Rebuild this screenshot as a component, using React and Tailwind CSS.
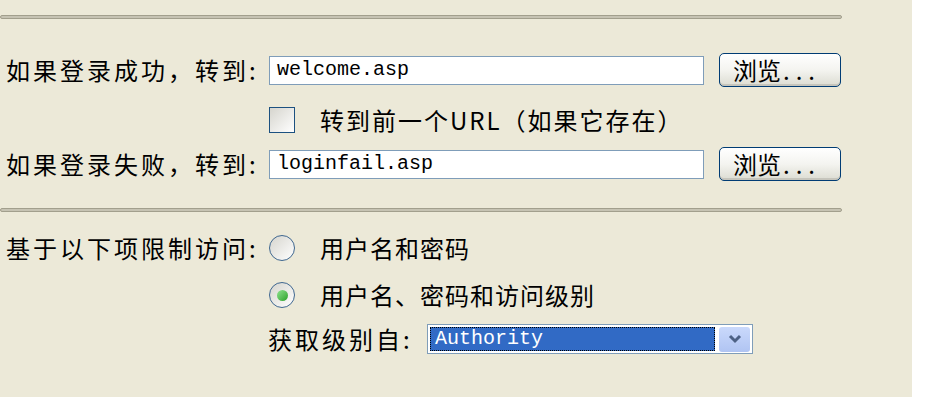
import React from 'react';

const cjk = { fontFamily: '"Noto Sans CJK SC", "Noto Sans", sans-serif' };
const mono = { fontFamily: '"Liberation Mono", "DejaVu Sans Mono", monospace' };

function Separator({ className }) {
  return (
    <div className={`w-[842px] h-[4px] rounded-full border border-[#a29f8d] bg-[#c6c3b3] ${className}`} />
  );
}

function TextField({ value }) {
  return (
    <div className="w-[435px] h-[29px] border border-[#7f9db9] bg-white flex items-center pl-[7px]">
      <span className="text-[20px] text-black leading-none" style={mono}>{value}</span>
    </div>
  );
}

function BrowseButton() {
  return (
    <button className="ml-[15px] w-[122px] h-[34px] rounded-[5px] border border-[#003c74] bg-gradient-to-b from-white via-[#f4f4f0] to-[#dcdcd2] shadow-[inset_0_-2px_0_#c6c5bc] flex items-center pl-[13px] text-[24px] text-black leading-none">
      浏览<span className="tracking-[6px] ml-[2px]">...</span>
    </button>
  );
}

function Checkbox() {
  return (
    <div className="w-[26px] h-[26px] border border-[#1c5180] bg-gradient-to-br from-[#d6d5ce] to-white" />
  );
}

function Radio({ checked }) {
  return (
    <div className="w-[26px] h-[26px] rounded-full border border-[#3f6790] bg-gradient-to-br from-[#d6d5ce] to-white flex items-center justify-center">
      {checked && (
        <div className="w-[11px] h-[11px] rounded-full bg-gradient-to-br from-[#8ee38e] to-[#21a121]" />
      )}
    </div>
  );
}

export default function App() {
  return (
    <div className="w-[929px] h-[407px] bg-white text-black" style={cjk}>
      <div className="w-[912px] h-[397px] bg-[#ece9d8] flex flex-col overflow-hidden">
        <Separator className="mt-[15px]" />

        {/* success redirect */}
        <div className="mt-[34px] h-[34px] flex items-center">
          <span className="w-[269px] pl-[6px] text-[24px] tracking-[3px] leading-none whitespace-nowrap">如果登录成功，转到:</span>
          <TextField value="welcome.asp" />
          <BrowseButton />
        </div>

        <div className="mt-[18px] h-[30px] flex items-center pl-[269px]">
          <Checkbox />
          <span className="ml-[25px] text-[24px] tracking-[2px] leading-none whitespace-nowrap">转到前一个URL（如果它存在）</span>
        </div>

        {/* failure redirect */}
        <div className="mt-[12px] h-[34px] flex items-center">
          <span className="w-[269px] pl-[6px] text-[24px] tracking-[3px] leading-none whitespace-nowrap">如果登录失败，转到:</span>
          <TextField value="loginfail.asp" />
          <BrowseButton />
        </div>

        <Separator className="mt-[27px]" />

        {/* restrictions */}
        <div className="mt-[21px] h-[30px] flex items-center">
          <span className="w-[269px] pl-[6px] text-[24px] tracking-[3px] leading-none whitespace-nowrap">基于以下项限制访问:</span>
          <Radio />
          <span className="ml-[25px] text-[24px] tracking-[1px] leading-none whitespace-nowrap">用户名和密码</span>
        </div>

        <div className="mt-[17px] h-[30px] flex items-center pl-[269px]">
          <Radio checked />
          <span className="ml-[25px] text-[24px] tracking-[1px] leading-none whitespace-nowrap">用户名、密码和访问级别</span>
        </div>

        <div className="mt-[14px] h-[30px] flex items-center pl-[268px]">
          <span className="w-[159px] text-[24px] tracking-[3px] leading-none whitespace-nowrap">获取级别自:</span>
          <div className="w-[326px] h-[30px] border border-[#7f9db9] bg-white flex items-center p-[2px]">
            <div className="flex-1 h-[24px] bg-[#316ac5] border border-dotted border-black flex items-center pl-[4px]">
              <span className="text-[20px] text-white leading-none" style={mono}>Authority</span>
            </div>
            <div className="shrink-0 ml-[4px] w-[31px] h-[25px] rounded-[3px] bg-gradient-to-b from-[#cad9fc] to-[#b0c4f2] flex items-center justify-center">
              <svg width="14" height="10" viewBox="0 0 14 10">
                <path d="M2 2 L7 7 L12 2" fill="none" stroke="#4d6185" strokeWidth="3" />
              </svg>
            </div>
          </div>
        </div>
      </div>
    </div>
  );
}
